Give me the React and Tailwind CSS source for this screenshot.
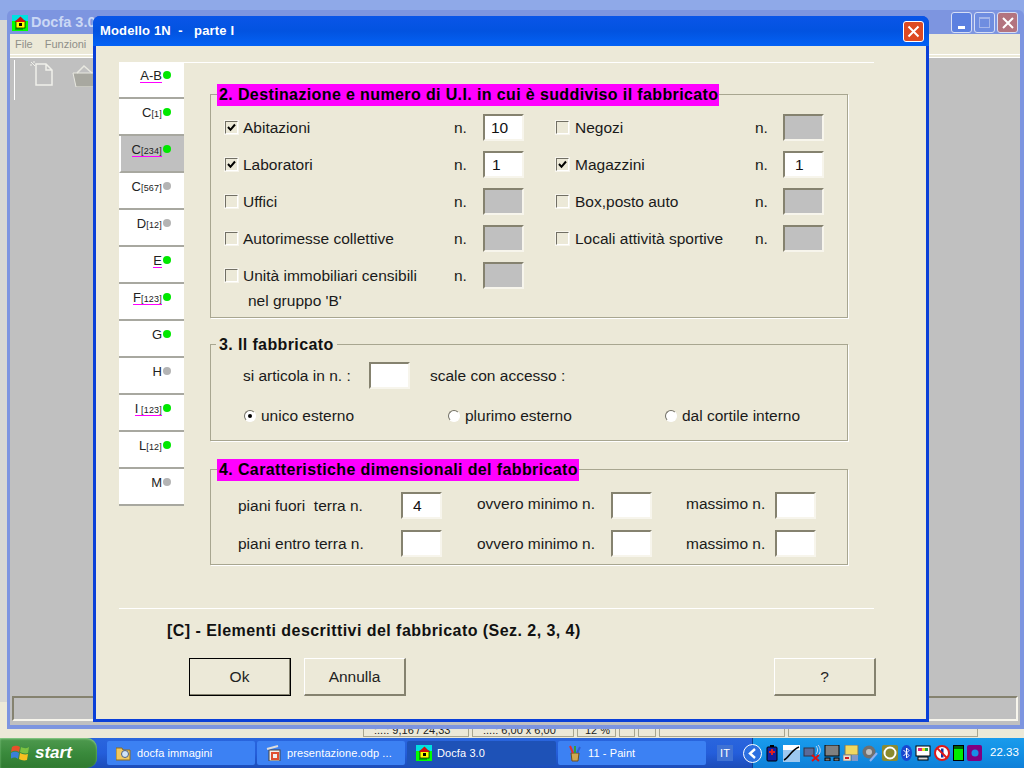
const font = { fontFamily: '"Liberation Sans", Arial, sans-serif' };

function DocfaIcon({ size = 16 }) {
  return (
    <svg width={size} height={size} viewBox="0 0 16 16" className="shrink-0">
      <rect width="16" height="16" fill="#00ff00" />
      <rect width="16" height="6" fill="#00e0e0" />
      <rect x="4" y="6" width="9" height="7" fill="#ffff00" stroke="#000" strokeWidth="0.7" />
      <path d="M2.5 7 L8.5 1.5 L14 7 Z" fill="#d01010" />
      <rect x="7" y="8" width="3" height="3" fill="#000" />
      <rect x="3" y="13.5" width="8" height="1" fill="#006000" />
    </svg>
  );
}

function Sunken({ value, gray, pad = "pl-[10px]", className = "" }) {
  return (
    <div className={`w-[41px] h-[27px] border-2 border-t-[#85826f] border-l-[#85826f] border-b-[#f7f5ec] border-r-[#f7f5ec] flex items-center ${pad} text-[15.5px] text-[#111] ${gray ? "bg-[#c0c0c0]" : "bg-white"} ${className}`}>
      {value}
    </div>
  );
}

function Check({ checked }) {
  return (
    <div className="w-[13px] h-[13px] border border-t-[#716f64] border-l-[#716f64] border-b-white border-r-white bg-[#ece9d8] shrink-0 flex items-center justify-center outline outline-1 outline-[#f7f5ec]">
      {checked && (
        <svg width="9" height="9" viewBox="0 0 9 9">
          <path d="M1 4 L3.5 6.8 L8 1.5" fill="none" stroke="#000" strokeWidth="2" />
        </svg>
      )}
    </div>
  );
}

function Radio({ on }) {
  return (
    <div className="w-[12px] h-[12px] ml-px rounded-full bg-white border border-[#716f64] border-r-white border-b-white shrink-0 flex items-center justify-center">
      {on && <div className="w-[4px] h-[4px] rounded-full bg-black" />}
    </div>
  );
}

function FieldRow({ checked, label, value, gray, labelOffset = "ml-[5px]", pad }) {
  return (
    <>
      <div className="flex items-center h-[37px]">
        <Check checked={checked} />
        <div className={`${labelOffset} text-[15.5px] text-[#1a1a1a] whitespace-nowrap`}>{label}</div>
      </div>
      <div className="text-[15.5px] text-[#1a1a1a] h-[37px] flex items-center">n.</div>
      <div className="h-[37px] flex items-center"><Sunken value={value} gray={gray} pad={pad} /></div>
    </>
  );
}

const tabs = [
  { m: "A-B", on: true, u: true },
  { m: "C", s: "[1]", on: true },
  { m: "C", s: "[234]", on: true, u: true, sel: true },
  { m: "C", s: "[567]" },
  { m: "D", s: "[12]" },
  { m: "E", on: true, u: true },
  { m: "F", s: "[123]", on: true, u: true },
  { m: "G", on: true },
  { m: "H" },
  { m: "I", s: " [123]", on: true, u: true },
  { m: "L", s: "[12]", on: true },
  { m: "M" },
];

function Tab({ t }) {
  return (
    <div className={`h-[37px] pt-[5px] pr-[13px] flex justify-end items-start border-b-2 border-[#a8a8a0] ${t.sel ? "bg-[#c0c0c0] border-l-2 border-l-white" : "bg-white"}`}>
      <div className="flex items-start gap-[1px]">
        <span className="h-[20px] leading-[18px] text-[13px] text-[#222] whitespace-pre relative">
          {t.m}
          {t.s && <span className="text-[9px] tracking-[0.2px]">{t.s}</span>}
          {t.u && <span className="absolute left-0 right-0 top-[15px] h-[1px] bg-[#ff00ff]" />}
        </span>
        <span className={`mt-[4px] w-[8px] h-[8px] rounded-full ${t.on ? "bg-[#00e800]" : "bg-[#b4b4b4]"}`} />
      </div>
    </div>
  );
}

function XPButton({ kind, faded }) {
  const bg = kind === "close" ? (faded ? "bg-[#b3747f]" : "bg-[#d9502c]") : kind === "max" ? "bg-[#6f8de0]" : "bg-[#5c80e0]";
  return (
    <div className={`w-[21px] h-[21px] rounded-[3px] border border-[#d6def5] flex items-center justify-center ${bg}`}>
      {kind === "close" && (
        <svg width="12" height="12" viewBox="0 0 12 12"><path d="M1 1 L11 11 M11 1 L1 11" stroke="#fff" strokeWidth="2" /></svg>
      )}
      {kind === "min" && <div className="w-[7px] h-[3px] bg-white mt-[9px] -ml-[1px]" />}
      {kind === "max" && <div className="w-[11px] h-[11px] border border-[#a5b6ea] border-t-2" />}
    </div>
  );
}

function TaskBtn({ icon, label, active, width }) {
  return (
    <div className={`h-[24px] ${width} rounded-[2px] flex items-center pl-[9px] gap-[5px] text-[11px] text-white whitespace-nowrap overflow-hidden ${active ? "bg-[#1e52b7]" : "bg-[#3c81f3]"}`}>
      {icon}
      <span className="tracking-[0.1px]">{label}</span>
    </div>
  );
}

function WinBtn({ label, className = "", w = "w-[102px]" }) {
  return (
    <div className={`${w} h-[38px] flex items-center justify-center text-[15.5px] text-[#222] border-t border-l border-t-white border-l-white border-b-2 border-r-2 border-b-[#85826f] border-r-[#85826f] ${className}`}>
      {label}
    </div>
  );
}

function Legend({ children }) {
  return (
    <div className="absolute left-[6px] -top-[11px] h-[22px] bg-[#ff00ff] pl-[2px] pr-[1px] flex items-center text-[16px] font-bold leading-none text-black whitespace-nowrap tracking-[0.38px]">
      {children}
    </div>
  );
}

const trayIcons = [
  <svg key="b" width="16" height="18" viewBox="0 0 16 18"><rect x="3" y="3" width="10" height="14" rx="1" fill="#1020a0" stroke="#000" /><rect x="6" y="1" width="4" height="2" fill="#000" /><path d="M8 5v6M5 8h6" stroke="#e02020" strokeWidth="2" /></svg>,
  <svg key="o" width="17" height="17" viewBox="0 0 17 17"><rect width="17" height="17" fill="#9cc8f0" /><rect width="17" height="5" fill="#fff" /><path d="M1 15 C6 13 8 5 16 2" fill="none" stroke="#000" strokeWidth="1.6" /></svg>,
  <svg key="n" width="18" height="18" viewBox="0 0 18 18"><rect x="1" y="4" width="10" height="8" fill="#5a6a98" stroke="#334" /><path d="M13 2c2 2 2 6 0 8M15 1c3 3 3 8 0 10" stroke="#c8d4f0" fill="none" /><path d="M9 11 L16 17 M16 11 L9 17" stroke="#e01010" strokeWidth="2" /></svg>,
  <svg key="m" width="16" height="16" viewBox="0 0 16 16"><rect x="1" y="0" width="14" height="11" fill="#808080" stroke="#000" /><rect x="1" y="13" width="5" height="3" fill="#777" stroke="#000" /><rect x="10" y="13" width="5" height="3" fill="#777" stroke="#000" /></svg>,
  <svg key="d" width="16" height="16" viewBox="0 0 16 16"><rect x="2" y="0" width="13" height="10" fill="#f0d860" stroke="#776" /><rect x="0" y="10" width="8" height="6" fill="#e8e0d0" stroke="#888" /><path d="M2 13h4" stroke="#d02020" strokeWidth="2" /><rect x="9" y="10" width="6" height="6" fill="#8098c8" /></svg>,
  <svg key="s" width="17" height="17" viewBox="0 0 17 17"><circle cx="7" cy="7" r="6.5" fill="#707070" /><circle cx="7" cy="7" r="3" fill="#c0c0c0" /><path d="M8 16 L15 8" stroke="#8fb0f0" strokeWidth="2" /></svg>,
  <svg key="w" width="16" height="16" viewBox="0 0 16 16"><rect width="16" height="16" rx="2" fill="#8a8a30" /><circle cx="8" cy="8" r="5.5" fill="none" stroke="#fff" strokeWidth="2" /><path d="M4 10 L12 6" stroke="#8a8a30" strokeWidth="2" /></svg>,
  <svg key="bt" width="11" height="16" viewBox="0 0 11 16"><ellipse cx="5.5" cy="8" rx="5.5" ry="8" fill="#1848d0" /><path d="M2.5 5 L8 10.5 L5.5 13 V3 L8 5.5 L2.5 11" stroke="#fff" fill="none" /></svg>,
  <svg key="c" width="16" height="16" viewBox="0 0 16 16"><rect x="1" y="1" width="14" height="10" fill="#fff" stroke="#000" /><path d="M3 3h4v3H3z" fill="#e02080" /><path d="M7 3h3v3H7z" fill="#e8e020" /><path d="M10 3h3v3h-3z" fill="#20a040" /><rect x="3" y="12" width="10" height="3" fill="#d8d8d8" stroke="#000" /></svg>,
  <svg key="no" width="16" height="16" viewBox="0 0 16 16"><circle cx="8" cy="8" r="7" fill="#fff" stroke="#e01818" strokeWidth="2" /><rect x="7" y="3.5" width="2.5" height="9" fill="#1030a0" /><path d="M3 3 L13 13" stroke="#e01818" strokeWidth="2" /></svg>,
  <svg key="g" width="11" height="16" viewBox="0 0 11 16"><rect x="0.5" y="0.5" width="10" height="15" fill="#00ee00" stroke="#000" /><rect x="1" y="1" width="9" height="3" fill="#006000" /></svg>,
  <svg key="p" width="15" height="16" viewBox="0 0 15 16"><rect width="15" height="16" rx="2" fill="#800080" /><circle cx="8" cy="8" r="3.5" fill="#1a8fe8" /></svg>,
];

export default function App() {
  return (
    <div className="w-[1024px] h-[768px] flex flex-col overflow-hidden bg-[#c0c0c0] text-[#1a1a1a]" style={font}>
      {/* desktop area */}
      <div className="relative flex-1 bg-[#ece9d8]">
        {/* Paint window behind */}
        <div className="absolute inset-0 flex flex-col">
          <div className="h-[20px] bg-[#8fa9e8]" />
          <div className="flex-1 bg-[#d8d8d4]" />
          <div className="h-[36px] bg-[#ece9d8] flex items-end pb-px">
            <div className="w-[363px]" />
            <div className="flex gap-[3px] text-[11px] h-[16px] text-[#222]">
              <div className="w-[106px] pl-[10px] border border-[#a8a690] whitespace-nowrap">:...: 9,16 / 24,33</div>
              <div className="w-[102px] pl-[10px] border border-[#a8a690] whitespace-nowrap">:...: 6,00 x 6,00</div>
              <div className="w-[39px] pl-[7px] border border-[#a8a690]">12 %</div>
              <div className="w-[16px] border border-[#a8a690]" />
              <div className="w-[18px] border border-[#a8a690]" />
              <div className="w-[126px] border border-[#a8a690]" />
              <div className="w-[190px] border border-[#a8a690]" />
            </div>
          </div>
        </div>

        {/* Docfa window */}
        <div className="absolute left-[7px] top-[10px] right-0 h-[719px] bg-[#7d95e0] pl-[3px] pr-[4px] pb-[4px] flex flex-col rounded-t-[6px]">
          <div className="h-[24px] flex items-center pl-[2px] pt-[1px] gap-[3px] text-[14.5px] font-bold text-[#cbd8f5]">
            <DocfaIcon size={16} />
            <span>Docfa 3.0</span>
            <div className="ml-auto flex gap-[2px] mr-[2px]">
              <XPButton kind="min" />
              <XPButton kind="max" />
              <XPButton kind="close" faded />
            </div>
          </div>
          <div className="h-[21px] bg-[#ece9d8] flex items-center gap-[12px] pl-[5px] text-[11px] text-[#8f8f88] border-b border-white">
            <span>File</span>
            <span>Funzioni</span>
          </div>
          <div className="h-[2px] bg-[#ece9d8]" />
          <div className="flex-1 bg-[#c0c0c0] border-t border-white flex flex-col">
            <div className="h-[40px] flex items-start pl-[4px] pt-[2px]">
              <div className="w-px h-[40px] bg-white" />
              <svg width="26" height="30" viewBox="0 0 26 30" className="ml-[14px]">
                <path d="M7 4 H17 L23 10 V25 H7 Z M17 4 V10 H23" fill="none" stroke="#f0f0ea" strokeWidth="1.5" />
                <path d="M2 2 L6 6 M5 1 V3 M1 5 H3" stroke="#f0f0ea" />
              </svg>
              <svg width="26" height="24" viewBox="0 0 26 24" className="ml-[17px] mt-[3px]">
                <path d="M1 10 H25 L22 24 H4 Z" fill="#a8a8a0" stroke="#e8e8e0" />
                <path d="M5 10 L12 3 L20 10" fill="none" stroke="#e8e8e0" strokeWidth="1.5" />
              </svg>
            </div>
            <div className="flex-1" />
            <div className="h-[25px] mx-[2px] mb-[4px] border-2 border-t-[#85826f] border-l-[#85826f] border-b-[#f7f5ec] border-r-[#f7f5ec]" />
          </div>
        </div>

        {/* Modal dialog */}
        <div className="absolute left-[93px] top-[16px] w-[836px] h-[706px] bg-[#0a3fd8] rounded-t-[7px] px-[3px] pb-[3px] flex flex-col">
          <div className="h-[30px] -mx-[3px] px-[7px] rounded-t-[7px] flex items-center justify-between bg-gradient-to-b from-[#0a55e8] via-[#0253e0] to-[#0462f5]">
            <span className="text-[13px] font-bold text-white whitespace-pre tracking-[0.15px]">Modello 1N  -   parte I</span>
            <div className="w-[21px] h-[21px] rounded-[3px] border border-white bg-[#dd4a22] flex items-center justify-center mr-[-2px]">
              <svg width="13" height="13" viewBox="0 0 13 13"><path d="M1.5 1.5 L11.5 11.5 M11.5 1.5 L1.5 11.5" stroke="#fff" strokeWidth="2" /></svg>
            </div>
          </div>
          <div className="flex-1 bg-[#ece9d8] flex flex-col pl-[23px] pt-[16px] pb-[22px]">
            <div className="flex items-start">
              {/* tabs */}
              <div className="w-[65px] shrink-0 flex flex-col">
                {tabs.map((t, i) => <Tab t={t} key={i} />)}
              </div>
              {/* main */}
              <div className="flex-1 flex flex-col">
                <div className="h-px w-[690px] bg-white" />
                {/* group 2 */}
                <div className="relative ml-[26px] mt-[31px] w-[638px] h-[224px] border border-[#a8a690] pt-[14px] pl-[14px] shadow-[1px_1px_0_#fff]">
                  <Legend>2. Destinazione e numero di U.I. in cui è suddiviso il fabbricato</Legend>
                  <div className="grid grid-cols-[229px_29px_41px_32px_199px_28px_41px] auto-rows-[37px]">
                    <FieldRow checked label="Abitazioni" value="10" pad="pl-[6px]" />
                    <div />
                    <FieldRow label="Negozi" gray labelOffset="ml-[6px]" />
                    <FieldRow checked label="Laboratori" value="1" pad="pl-[7px]" />
                    <div />
                    <FieldRow checked label="Magazzini" value="1" labelOffset="ml-[6px]" />
                    <FieldRow label="Uffici" gray />
                    <div />
                    <FieldRow label="Box,posto auto" gray labelOffset="ml-[6px]" />
                    <FieldRow label="Autorimesse collettive" gray />
                    <div />
                    <FieldRow label="Locali attività sportive" gray labelOffset="ml-[6px]" />
                    <FieldRow label="Unità immobiliari censibili" gray />
                  </div>
                  <div className="ml-[23px] -mt-[5px] text-[15.5px] whitespace-nowrap">nel gruppo 'B'</div>
                </div>
                {/* group 3 */}
                <div className="relative ml-[26px] mt-[26px] w-[638px] h-[97px] border border-[#a8a690] shadow-[1px_1px_0_#fff] pl-[32px] pt-[17px]">
                  <div className="absolute left-[5px] -top-[10px] h-[20px] px-[3px] bg-[#ece9d8] flex items-center text-[16px] font-bold leading-none text-[#111] tracking-[0.38px] whitespace-nowrap">3. Il fabbricato</div>
                  <div className="flex items-center h-[27px] text-[15.5px]">
                    <span className="w-[126px] whitespace-nowrap">si articola in n. :</span>
                    <Sunken />
                    <span className="ml-[20px] whitespace-nowrap">scale con accesso :</span>
                  </div>
                  <div className="flex items-center mt-[13px] h-[28px] text-[15.5px]">
                    <div className="w-[204px] flex items-center gap-[5px]"><Radio on /><span>unico esterno</span></div>
                    <div className="w-[217px] flex items-center gap-[5px]"><Radio /><span>plurimo esterno</span></div>
                    <div className="flex items-center gap-[5px]"><Radio /><span>dal cortile interno</span></div>
                  </div>
                </div>
                {/* group 4 */}
                <div className="relative ml-[26px] mt-[28px] w-[638px] h-[96px] border border-[#a8a690] shadow-[1px_1px_0_#fff] pl-[27px] pt-[22px]">
                  <Legend>4. Caratteristiche dimensionali del fabbricato</Legend>
                  <div className="grid grid-cols-[163px_41px_35px_134px_41px_34px_89px_41px] auto-rows-[38px] text-[15.5px] whitespace-pre">
                    <div className="h-[27px] flex items-center">piani fuori  terra n.</div>
                    <Sunken value="4" />
                    <div />
                    <div className="h-[27px] flex items-center -mt-[2px]">ovvero minimo n.</div>
                    <Sunken />
                    <div />
                    <div className="h-[27px] flex items-center -mt-[2px]">massimo n.</div>
                    <Sunken />
                    <div className="h-[27px] flex items-center">piani entro terra n.</div>
                    <Sunken />
                    <div />
                    <div className="h-[27px] flex items-center">ovvero minimo n.</div>
                    <Sunken />
                    <div />
                    <div className="h-[27px] flex items-center">massimo n.</div>
                    <Sunken />
                  </div>
                </div>
              </div>
            </div>
            <div className="h-px w-[755px] bg-white mt-[43px]" />
            <div className="ml-[48px] mt-[13px] h-[18px] flex items-center text-[16px] font-bold text-[#111] whitespace-nowrap tracking-[0.45px]">[C] - Elementi descrittivi del fabbricato (Sez. 2, 3, 4)</div>
            <div className="ml-[70px] mt-[18px] flex items-start">
              <WinBtn label="Ok" className="outline outline-1 outline-black -outline-offset-1" />
              <WinBtn label="Annulla" className="ml-[13px]" />
              <WinBtn label="?" className="ml-[368px]" />
            </div>
          </div>
        </div>
      </div>

      {/* taskbar */}
      <div className="h-[30px] shrink-0 flex items-center bg-gradient-to-b from-[#2a66dd] via-[#245edb] to-[#1c4cb8] text-white">
        <div className="w-[97px] h-full rounded-r-[10px] bg-gradient-to-b from-[#4f9a4f] via-[#3a8a3c] to-[#2f7a30] flex items-center pl-[11px] gap-[5px] text-[17px] font-bold italic shadow-[inset_0_1px_2px_#8fd08f]">
          <svg width="19" height="18" viewBox="0 0 19 18">
            <path d="M1 3 C4 1 7 2 9 3 L8 8 C6 7 3 6 0 8 Z" fill="#e8502a" />
            <path d="M10 3 C12 4 15 5 18 3 L17 9 C14 10 11 9 9 8 Z" fill="#7cc242" />
            <path d="M0 9 C3 7 6 8 8 9 L7 15 C5 13 2 13 -1 15 Z" fill="#3a7fd8" />
            <path d="M9 9 C11 10 14 11 17 10 L16 16 C13 17 10 16 8 15 Z" fill="#f8c020" />
          </svg>
          <span>start</span>
        </div>
        <div className="flex ml-[10px] gap-[2px] items-center">
          <TaskBtn width="w-[148px]" label="docfa immagini" icon={
            <svg width="16" height="15" viewBox="0 0 16 15"><path d="M0 2 H6 L7 4 H14 V14 H0 Z" fill="#f0c860" stroke="#8a6a20" /><circle cx="9" cy="8" r="3.5" fill="#d0e4f8" stroke="#506080" /></svg>
          } />
          <TaskBtn width="w-[148px]" label="presentazione.odp ..." icon={
            <svg width="16" height="16" viewBox="0 0 16 16"><rect x="3" y="5" width="11" height="11" fill="#f0f0f0" stroke="#444" /><rect x="6" y="8" width="6" height="6" fill="none" stroke="#e05030" strokeWidth="2" /><path d="M1 4 L12 1" stroke="#ddd" strokeWidth="2" /></svg>
          } />
          <TaskBtn width="w-[149px]" active label="Docfa 3.0" icon={<DocfaIcon size={16} />} />
          <TaskBtn width="w-[148px]" label="11 - Paint" icon={
            <svg width="16" height="17" viewBox="0 0 16 17"><path d="M4 8 H12 L11 16 H5 Z" fill="#d0a850" stroke="#705020" /><path d="M6 8 L3 1" stroke="#e03030" strokeWidth="2" /><path d="M8 8 V1" stroke="#30a040" strokeWidth="2" /><path d="M10 8 L13 2" stroke="#3060d0" strokeWidth="2" /></svg>
          } />
        </div>
        <div className="ml-[11px] w-[16px] h-[16px] bg-[#3f72d4] text-[11px] flex items-center justify-center">IT</div>
        <div className="ml-[19px] flex-1 h-full bg-gradient-to-b from-[#1a9bec] via-[#1290e4] to-[#0f7fd8] border-l border-[#0e3f90] flex items-center relative pl-[11px] gap-[3px] min-w-0">
          <div className="absolute -left-[10px] w-[19px] h-[19px] rounded-full bg-[#2c6fe0] border border-white flex items-center justify-center">
            <svg width="9" height="11" viewBox="0 0 9 11"><path d="M7 1 L2 5.5 L7 10" fill="none" stroke="#fff" strokeWidth="2.4" /></svg>
          </div>
          {trayIcons}
          <span className="ml-[5px] text-[11.5px] whitespace-nowrap">22.33</span>
        </div>
      </div>
    </div>
  );
}
